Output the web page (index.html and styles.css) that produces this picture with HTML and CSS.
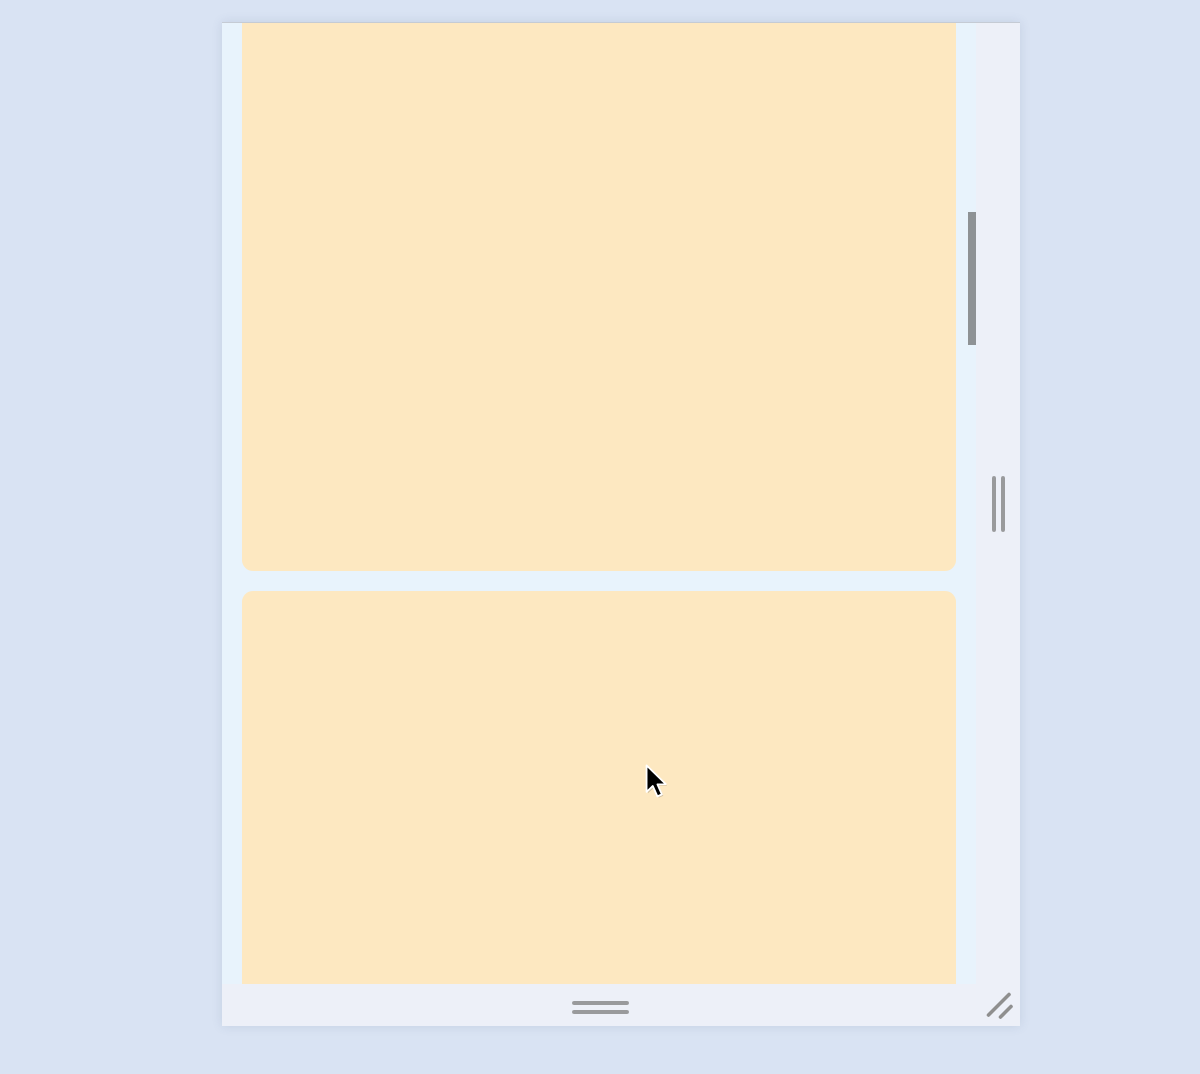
FILE: index.html
```html
<!DOCTYPE html>
<html>
<head>
<meta charset="utf-8">
<link rel="stylesheet" href="styles.css">
</head>
<body>
<div class="panel">
  <div class="strip"></div>
  <div class="viewport">
    <div class="scroller">
      <div class="card card-first"></div>
      <div class="card card-second"></div>
    </div>
  </div>
  <div class="track"><div class="thumb"></div></div>
  <div class="side-handle">
    <span class="vbar"></span><span class="vbar"></span>
  </div>
  <div class="bottom">
    <div class="hgrip"><span class="hbar"></span><span class="hbar"></span></div>
    <svg class="resize" width="30" height="30" viewBox="0 0 30 30">
      <line x1="4.5" y1="23" x2="25" y2="2.5" />
      <line x1="16.5" y1="25" x2="27" y2="14.5" />
    </svg>
  </div>
</div>
<svg class="cursor" width="31" height="39" viewBox="0 0 22 28">
  <path class="cursor-shadow" d="M2 2 L2 21 L6.5 16.8 L9.8 24.2 L13 22.8 L9.8 15.6 L15.8 15.4 Z" />
  <path class="cursor-arrow" d="M1 1 L1 20 L5.5 15.8 L8.8 23.2 L12 21.8 L8.8 14.6 L14.8 14.4 Z" />
</svg>
</body>
</html>
```
FILE: styles.css
```css
html, body {
  margin: 0;
  padding: 0;
}
body {
  width: 1200px;
  height: 1074px;
  background: #d9e3f3;
  position: relative;
  overflow: hidden;
  font-family: "Liberation Sans", Arial, sans-serif;
}
.panel {
  margin: 22px 0 0 222px;
  width: 798px;
  height: 1004px;
  display: grid;
  grid-template-columns: 20px 714px 20px 44px;
  grid-template-rows: 961px 42px;
  border-top: 1px solid #c5cbd4;
  box-sizing: border-box;
  box-shadow: 0 0 10px rgba(70, 90, 130, 0.14);
}
.strip {
  background: #e8f3fc;
}
.viewport {
  background: #e8f3fc;
  overflow: hidden;
}
.scroller {
  margin-top: -20px;
  display: flex;
  flex-direction: column;
  gap: 20px;
}
.card {
  background: #fde8c1;
  border-radius: 11px;
  flex-shrink: 0;
}
.card-first {
  height: 568px;
}
.card-second {
  height: 700px;
}
.track {
  background: #e8f3fc;
  position: relative;
}
.thumb {
  position: absolute;
  right: 0;
  top: 189px;
  width: 8px;
  height: 133px;
  background: #8e9295;
}
.side-handle {
  background: #edf0f8;
  display: flex;
  justify-content: center;
  align-items: flex-start;
  gap: 5px;
  padding-top: 453px;
  padding-left: 1px;
  box-sizing: border-box;
}
.vbar {
  display: block;
  width: 4px;
  height: 56px;
  border-radius: 2px;
  background: #999a9c;
}
.bottom {
  grid-column: 1 / -1;
  background: #edf0f8;
  display: grid;
  grid-template-columns: 20px 714px 64px;
  align-items: start;
}
.hgrip {
  grid-column: 2;
  display: flex;
  flex-direction: column;
  align-items: center;
  gap: 5px;
  padding-top: 17px;
  padding-left: 3px;
}
.hbar {
  display: block;
  width: 57px;
  height: 4px;
  border-radius: 2px;
  background: #999a9c;
}
.resize {
  grid-column: 3;
  margin: 8px 0 0 28px;
}
.resize line {
  stroke: #8f8f8f;
  stroke-width: 3.6;
  stroke-linecap: round;
}
.cursor {
  position: absolute;
  left: 645px;
  top: 764px;
}
.cursor-shadow {
  fill: rgba(0, 0, 0, 0.18);
}
.cursor-arrow {
  fill: #000;
  stroke: #fff;
  stroke-width: 1.3;
  stroke-linejoin: round;
}
```
